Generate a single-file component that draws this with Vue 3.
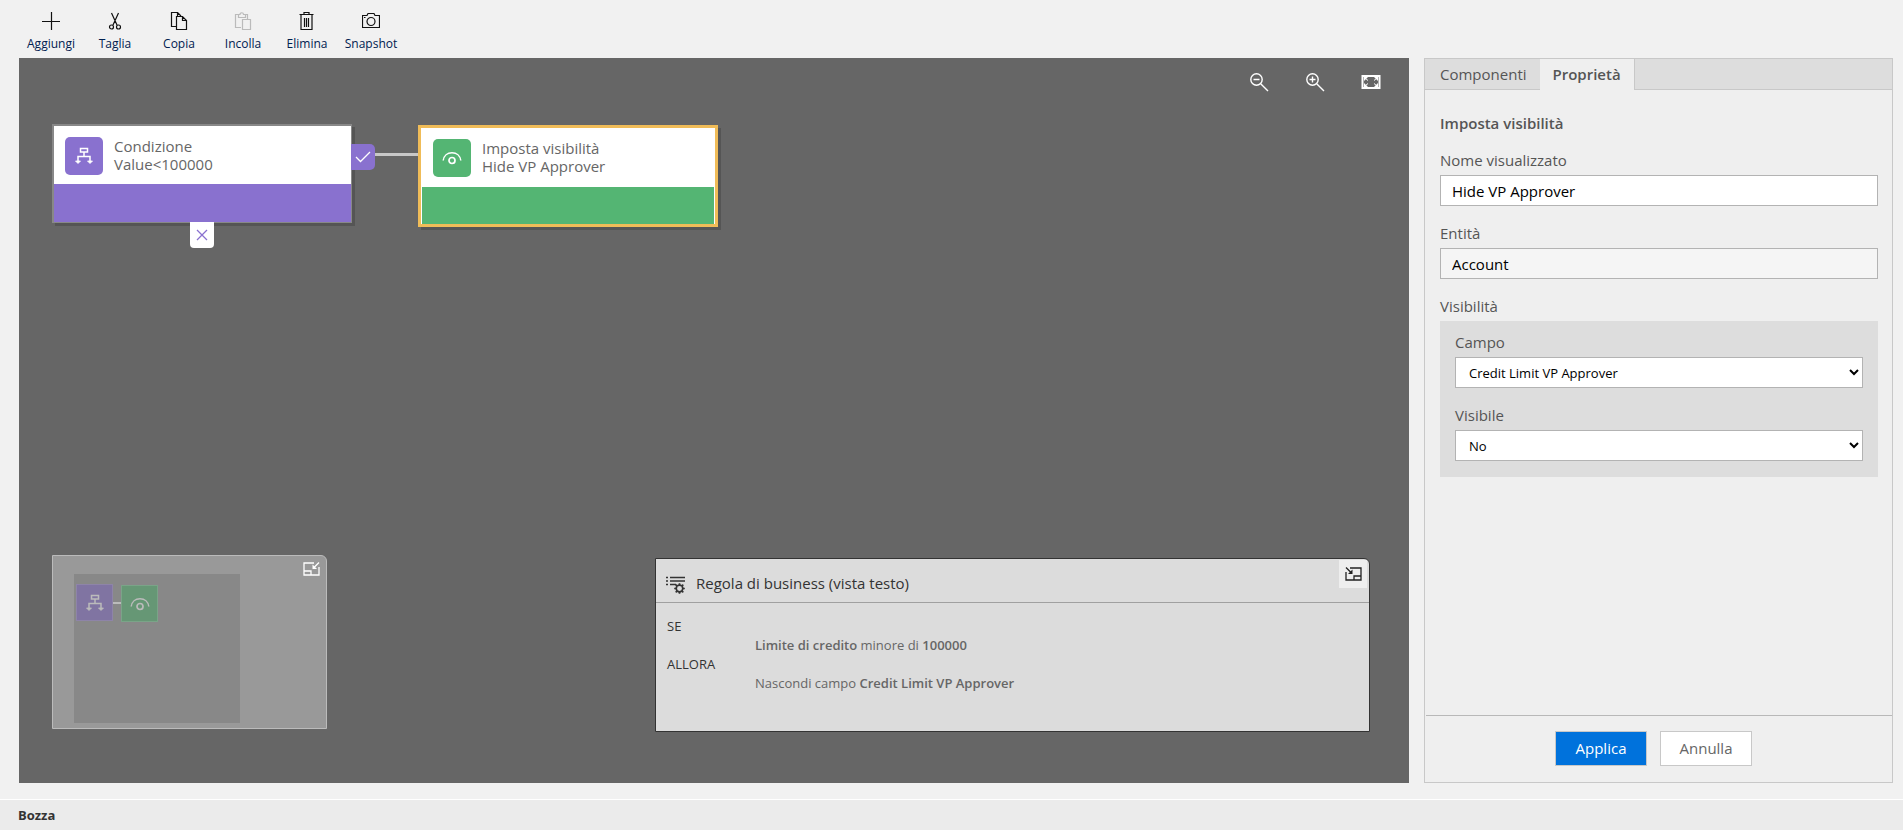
<template>
  <div class="designer">
    <!-- shared node glyphs -->
    <svg class="sprite" aria-hidden="true">
      <symbol id="glyph-condition" viewBox="0 0 18 18">
        <path d="M5.500 1.500h7v3.500h-7zM9 5v4.500M3 15V9.500h12V15" fill="none" stroke="currentColor" stroke-width="1.500" />
        <path d="M.5 14l2.500 2.500L5.500 14zM12.500 14l2.500 2.500 2.500-2.500z" fill="currentColor" stroke="currentColor" stroke-width=".8" />
      </symbol>
      <symbol id="glyph-visibility" viewBox="0 0 20 14">
        <path d="M1.200 9.500C1.800 4.500 5.500 1.700 10 1.700s8.200 2.800 8.800 7.800" fill="none" stroke="currentColor" stroke-width="1.500" />
        <circle cx="10" cy="9.500" r="3" fill="none" stroke="currentColor" stroke-width="1.700" />
      </symbol>
    </svg>

    <header class="toolbar">
      <button
        v-for="action in actions"
        :key="action.id"
        type="button"
        class="tool"
        :disabled="action.disabled"
      >
        <svg class="tool-icon" viewBox="0 0 18 18" aria-hidden="true">
          <path :d="action.path" />
        </svg>
        <span>{{ action.label }}</span>
      </button>
    </header>

    <main class="workspace">
      <section class="canvas">
        <div class="zoom-tools">
          <button type="button" class="zoom-btn" aria-label="Zoom indietro">
            <svg width="20" height="20" viewBox="0 0 20 20">
              <circle cx="7.500" cy="7.500" r="5.700" />
              <path d="M4.500 7.500h6M11.700 11.700l7.300 7.300" />
            </svg>
          </button>
          <button type="button" class="zoom-btn" aria-label="Zoom avanti">
            <svg width="20" height="20" viewBox="0 0 20 20">
              <circle cx="7.500" cy="7.500" r="5.700" />
              <path d="M4.500 7.500h6M7.500 4.500v6M11.700 11.700l7.300 7.300" />
            </svg>
          </button>
          <button type="button" class="zoom-btn" aria-label="Adatta">
            <svg width="20" height="20" viewBox="0 0 20 20">
              <path d="M1.500 4h17v12h-17z" stroke-width="2" />
              <path class="solid" d="M3 5h4L3 9zM17 5h-4l4 4zM3 15h4l-4-4zM17 15h-4l4-4z" />
              <path d="M4 6l3 2.500M16 6l-3 2.500M4 14l3-2.500M16 14l-3-2.500" stroke-width="1" />
            </svg>
          </button>
        </div>

        <div class="connector"></div>

        <div class="node condition">
          <div class="node-body">
            <span class="node-icon">
              <svg width="18" height="18"><use href="#glyph-condition" /></svg>
            </span>
            <div class="node-text">
              <div>Condizione</div>
              <div>Value&lt;100000</div>
            </div>
          </div>
          <div class="node-bar"></div>
          <span class="branch yes">
            <svg width="16" height="12" viewBox="0 0 16 12"><path d="M1 6l4.500 4.500L15 1" /></svg>
          </span>
          <span class="branch no">
            <svg width="12" height="12" viewBox="0 0 12 12"><path d="M1 1l10 10M11 1L1 11" /></svg>
          </span>
        </div>

        <div class="node visibility selected">
          <div class="node-body">
            <span class="node-icon">
              <svg width="20" height="14"><use href="#glyph-visibility" /></svg>
            </span>
            <div class="node-text">
              <div>Imposta visibilità</div>
              <div>Hide VP Approver</div>
            </div>
          </div>
          <div class="node-bar"></div>
        </div>

        <div class="canvas-bottom">
          <div class="minimap">
            <div class="minimap-view">
              <span class="mini-node purple">
                <svg width="18" height="18"><use href="#glyph-condition" /></svg>
              </span>
              <span class="mini-link"></span>
              <span class="mini-node green">
                <svg width="20" height="14"><use href="#glyph-visibility" /></svg>
              </span>
            </div>
            <button type="button" class="minimap-toggle" aria-label="Riduci mappa">
              <svg width="17" height="14" viewBox="0 0 17 14">
                <path d="M11 1H1v12h15V5M1 9h7v4M16 .5l-5 5" />
                <path class="solid" d="M9.500 2.500v4.500H14z" />
              </svg>
            </button>
          </div>

          <div class="text-view">
            <div class="text-view-header">
              <svg class="rule-icon" width="20" height="18" viewBox="0 0 20 18" aria-hidden="true">
                <path d="M0 1.500h2M4 1.500h15M0 5h2M4 5h15M0 8.500h2M4 8.500h6" stroke-width="1.400" />
                <circle cx="13.500" cy="12.500" r="3.300" stroke-width="1.700" />
                <path
                  d="M13.500 9V7.200M13.500 16v1.800M10 12.500H8.200M17 12.500h1.800M11 10L9.700 8.700M16 10l1.300-1.300M11 15l-1.300 1.300M16 15l1.300 1.300"
                  stroke-width="1.700"
                />
              </svg>
              <h2>Regola di business (vista testo)</h2>
              <button type="button" class="text-toggle" aria-label="Riduci vista testo">
                <svg width="17" height="14" viewBox="0 0 17 14">
                  <path d="M5 1h11v12H1V5M9 13V9h7M1 .5l5 5" />
                  <path class="solid" d="M7.500 2.500v4.500H3z" />
                </svg>
              </button>
            </div>
            <div class="text-view-body">
              <div class="keyword">SE</div>
              <div class="clause"><b>Limite di credito</b> minore di <b>100000</b></div>
              <div class="keyword">ALLORA</div>
              <div class="clause">Nascondi campo <b>Credit Limit VP Approver</b></div>
            </div>
          </div>
        </div>
      </section>

      <aside class="panel">
        <div class="tabs" role="tablist">
          <button
            v-for="tab in tabs"
            :key="tab"
            type="button"
            role="tab"
            :class="['tab', { active: tab === activeTab }]"
            :aria-selected="tab === activeTab"
            @click="activeTab = tab"
          >
            {{ tab }}
          </button>
        </div>

        <form id="properties" class="properties" @submit.prevent>
          <h2 class="properties-title">Imposta visibilità</h2>
          <div class="field">
            <label for="display-name">Nome visualizzato</label>
            <input id="display-name" v-model="displayName" type="text" />
          </div>
          <div class="field">
            <label for="entity">Entità</label>
            <input id="entity" type="text" value="Account" readonly />
          </div>
          <div id="visibility-label" class="group-label">Visibilità</div>
          <div class="group" role="group" aria-labelledby="visibility-label">
            <div class="field">
              <label for="campo">Campo</label>
              <select id="campo" v-model="fieldName">
                <option>Credit Limit VP Approver</option>
              </select>
            </div>
            <div class="field">
              <label for="visibile">Visibile</label>
              <select id="visibile" v-model="visible">
                <option>No</option>
                <option>Sì</option>
              </select>
            </div>
          </div>
        </form>

        <div class="panel-footer">
          <button type="submit" form="properties" class="btn primary">Applica</button>
          <button type="button" class="btn">Annulla</button>
        </div>
      </aside>
    </main>

    <footer class="status">Bozza</footer>
  </div>
</template>

<script setup>
import { ref } from 'vue'

const tabs = ['Componenti', 'Proprietà']
const activeTab = ref('Proprietà')

const displayName = ref('Hide VP Approver')
const fieldName = ref('Credit Limit VP Approver')
const visible = ref('No')

// toolbar actions, icons on an 18x18 grid
const actions = [
  { id: 'add', label: 'Aggiungi', path: 'M9.500 0v18M0 9.500h18' },
  {
    id: 'cut',
    label: 'Taglia',
    path: 'M5.500 1l5.500 12M12.500 1L7 13M7.500 15a2 2 0 1 1-4 0 2 2 0 0 1 4 0zM14.500 15a2 2 0 1 1-4 0 2 2 0 0 1 4 0z'
  },
  {
    id: 'copy',
    label: 'Copia',
    path: 'M6 14.500H1.500V.5h6l3.500 3.500M6.500 4.500h6l4 4v9h-10zM12.500 4.500v4h4M7.500.5v4'
  },
  {
    id: 'paste',
    label: 'Incolla',
    disabled: true,
    path: 'M7 15.500H1.500v-13H5M11 2.500h2.500V7M4.500 2.500h1.500a1.700 1.700 0 0 1 3.500 0h2v3h-7zM8.500 7.500h8v10h-8z'
  },
  {
    id: 'delete',
    label: 'Elimina',
    path: 'M1.500 2.500h14M6 2.500v-2h5v2M3 3v14.500h11V3M6.500 6v9M8.500 6v9M10.500 6v9'
  },
  {
    id: 'snapshot',
    label: 'Snapshot',
    path: 'M.5 3.500H5l1-2h6l1 2h4.500v12H.5zM13 9.500a4 4 0 1 1-8 0 4 4 0 0 1 8 0zM2 5.500h1.500'
  }
]
</script>

<style>
body {
  margin: 0;
}
</style>

<style scoped>
.designer {
  display: flex;
  flex-direction: column;
  min-height: 100vh;
  background: #f1f1f1;
  color: #555;
  font-family: "Open Sans", "Noto Sans", sans-serif;
  font-size: 15px;
  line-height: 20px;
}

.designer *,
.designer *::before {
  box-sizing: border-box;
}

.sprite {
  position: absolute;
  width: 0;
  height: 0;
}

svg {
  display: block;
  flex-shrink: 0;
}

button {
  font-family: inherit;
  cursor: pointer;
}

h2 {
  margin: 0;
}

/* toolbar */
.toolbar {
  display: flex;
  height: 58px;
  padding: 12px 19px 0;
}

.tool {
  display: flex;
  flex-direction: column;
  align-items: center;
  gap: 6px;
  width: 64px;
  padding: 0;
  border: none;
  background: none;
  color: #002050;
  font-size: 12px;
  line-height: 16px;
}

.tool-icon {
  width: 18px;
  height: 18px;
  fill: none;
  stroke: #111;
  stroke-width: 1.2;
}

.tool:disabled .tool-icon {
  stroke: #bbb;
}

/* layout */
.workspace {
  display: flex;
  flex: 1;
  gap: 15px;
  padding: 0 10px 16px 19px;
}

.canvas {
  position: relative;
  display: flex;
  flex: 1;
  flex-direction: column;
  justify-content: space-between;
  background: #666;
}

.zoom-tools {
  display: flex;
  justify-content: flex-end;
  gap: 36px;
  padding: 14px 28px;
}

.zoom-btn {
  padding: 0;
  border: none;
  background: none;
}

.zoom-btn svg {
  fill: none;
  stroke: #fff;
  stroke-width: 1.4;
}

.solid {
  fill: currentColor;
  stroke: none;
}

.zoom-btn .solid {
  fill: #fff;
  stroke: none;
}

/* nodes on the free canvas */
.connector {
  position: absolute;
  top: 95px;
  left: 356px;
  width: 43px;
  height: 3px;
  background: #c8c8c8;
}

.node {
  position: absolute;
  width: 300px;
  border: 1px solid #888;
  border-width: 2px 1px 1px 2px;
  background: #fff;
  box-shadow: 3px 3px 0 #555;
}

.node.condition {
  top: 66px;
  left: 33px;
}

.node.visibility {
  top: 67px;
  left: 399px;
}

.node.selected {
  border: 3px solid #f0bc58;
}

.node-body {
  display: flex;
  gap: 11px;
  height: 58px;
  padding: 11px;
}

.node-icon {
  display: flex;
  align-items: center;
  justify-content: center;
  width: 38px;
  height: 38px;
  border-radius: 5px;
  background: #8971cf;
  color: #fff;
}

.node-text {
  line-height: 18px;
  color: #666;
}

.node-bar {
  height: 38px;
  background: #8971cf;
}

.visibility .node-body {
  height: 59px;
  padding-left: 12px;
}

.visibility .node-icon,
.visibility .node-bar {
  background: #54b573;
}

.visibility .node-bar {
  height: 37px;
  margin: 0 1px;
}

.branch {
  position: absolute;
  display: flex;
  align-items: center;
  justify-content: center;
  width: 24px;
  height: 26px;
}

.branch svg {
  fill: none;
  stroke: #fff;
  stroke-width: 1.3;
}

.branch.yes {
  top: 18px;
  left: 100%;
  border-radius: 0 5px 5px 0;
  background: #8971cf;
}

.branch.no {
  top: 100%;
  left: 136px;
  border-radius: 0 0 4px 4px;
  background: #fff;
}

.branch.no svg {
  stroke: #8971cf;
}

/* minimap and text view */
.canvas-bottom {
  display: flex;
  align-items: flex-start;
  justify-content: space-between;
  padding: 0 39px 51px 33px;
}

.minimap {
  display: flex;
  align-items: flex-start;
  justify-content: space-between;
  width: 275px;
  height: 174px;
  padding: 6px 6px 5px 21px;
  border: 1px solid #bbb;
  border-radius: 0 6px 0 0;
  background: #999;
}

.minimap-view {
  display: flex;
  align-items: flex-start;
  width: 166px;
  height: 149px;
  margin-top: 12px;
  padding: 10px 2px;
  background: #888;
}

.mini-node {
  display: flex;
  align-items: center;
  justify-content: center;
  width: 37px;
  height: 37px;
  border: 1px solid #8e84a8;
  background: #8074a2;
  color: #bbb;
}

.mini-node.green {
  margin-top: 1px;
  border-color: #7aa488;
  background: #669775;
}

.mini-link {
  width: 8px;
  height: 2px;
  margin-top: 18px;
  background: #bbb;
}

.minimap-toggle {
  padding: 0;
  border: none;
  background: none;
  color: #fff;
}

.minimap-toggle svg,
.text-toggle svg {
  fill: none;
  stroke: currentColor;
  stroke-width: 1.3;
}

.minimap-toggle svg .solid,
.text-toggle svg .solid {
  fill: currentColor;
}

.text-view {
  width: 715px;
  height: 174px;
  margin-top: 3px;
  border: 1px solid #333;
  border-radius: 0 6px 0 0;
  background: #dcdcdc;
}

.text-view-header {
  display: flex;
  align-items: center;
  height: 44px;
  padding-left: 10px;
  border-bottom: 1px solid #a0a0a0;
  color: #333;
}

.text-view-header h2 {
  margin: 4px auto 0 10px;
  font-size: 15px;
  font-weight: 500;
}

.rule-icon {
  margin-top: 8px;
  fill: none;
  stroke: #333;
}

.text-toggle {
  display: flex;
  align-items: center;
  justify-content: center;
  align-self: flex-start;
  width: 28px;
  height: 28px;
  margin: 1px 2px 0 0;
  padding: 0;
  border: none;
  background: #eee;
  color: #222;
}

.text-view-body {
  padding: 14px 11px;
  color: #666;
  font-size: 13px;
  line-height: 19px;
}

.text-view-body b {
  font-weight: 600;
}

.keyword {
  color: #333;
}

.clause {
  padding-left: 88px;
}

/* property panel */
.panel {
  display: flex;
  flex-direction: column;
  width: 469px;
  border: 1px solid #c8c8c8;
  background: #efefef;
}

.tabs {
  display: flex;
  height: 31px;
  padding-left: 1px;
  background: #ddd;
  box-shadow: inset 0 -1px #c8c8c8;
}

.tab {
  padding: 0 13px 2px;
  border: none;
  background: none;
  color: #555;
  font-size: 15px;
}

.tab:first-child {
  padding-left: 14px;
}

.tab.active {
  border-right: 1px solid #c8c8c8;
  background: #efefef;
  font-weight: 600;
}

.properties {
  flex: 1;
  padding: 23px 14px 16px 15px;
}

.properties-title {
  margin-bottom: 17px;
  font-size: 15px;
  font-weight: 600;
}

.field {
  margin-bottom: 17px;
}

.field label,
.group-label {
  display: block;
  margin-bottom: 5px;
}

.field input,
.field select {
  display: block;
  width: 100%;
  height: 31px;
  padding: 0 11px;
  border: 1px solid #b3b3b3;
  border-radius: 0;
  background-color: #fff;
  color: #000;
  font-family: inherit;
  font-size: 15px;
}

.field input[readonly] {
  background-color: #f5f5f5;
}

.field select {
  padding: 0 9px;
  font-size: 13px;
}

.group {
  padding: 11px 15px 16px;
  background: #ddd;
}

.group .field:last-child {
  margin-bottom: 0;
}

.panel-footer {
  display: flex;
  justify-content: center;
  gap: 13px;
  padding: 15px 11px 16px 0;
  margin-left: 1px;
  border-top: 1px solid #b8b8b8;
}

.btn {
  width: 92px;
  height: 35px;
  padding: 0 0 2px;
  border: 1px solid #c8c8c8;
  background: #fff;
  color: #666;
  font-size: 15px;
}

.btn.primary {
  background: #0072dc;
  color: #fff;
}

/* status bar */
.status {
  padding: 5px 18px;
  border-top: 1px solid #fff;
  background: #ebebeb;
  color: #333;
  font-size: 13px;
  font-weight: 700;
}
</style>
